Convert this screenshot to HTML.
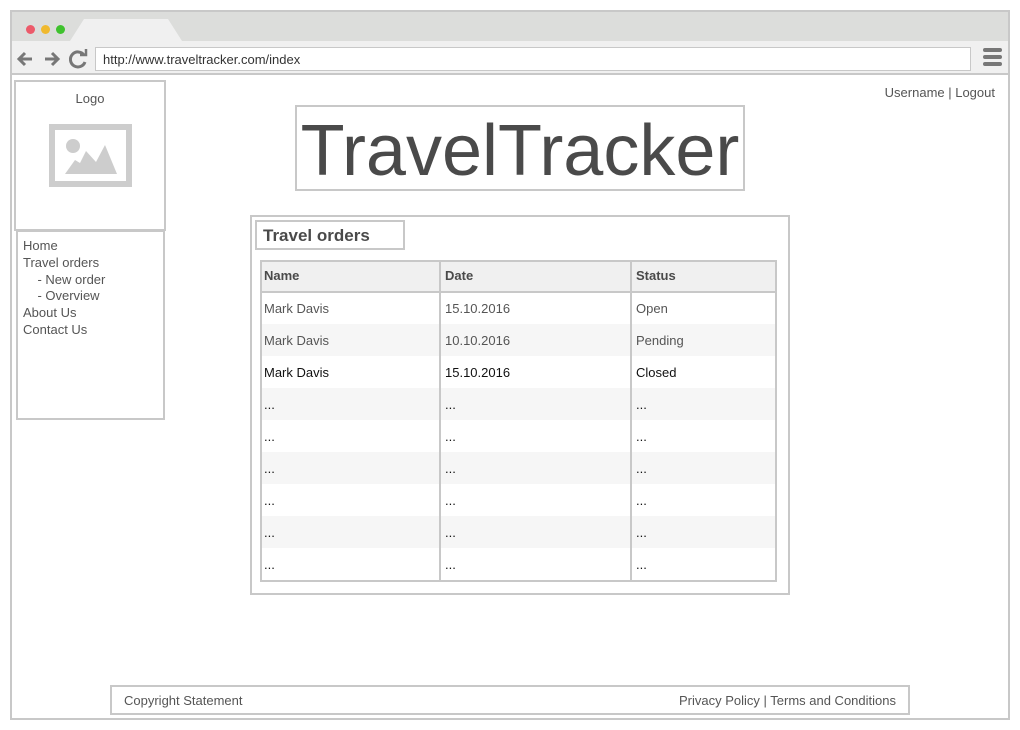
<!DOCTYPE html>
<html><head><style>
body{margin:0;width:1020px;height:730px;background:#fff;font-family:"Liberation Sans",sans-serif;color:#555;position:relative;overflow:hidden}
.a{position:absolute;box-sizing:border-box}
.b{border:2px solid #c8c8c8}
td{padding:0 0 0 4px;height:32px;font-size:13px;border-left:2px solid #c8c8c8;box-sizing:border-box}
table{border-collapse:collapse}
</style></head><body>
<div class="a" style="left:10px;top:10px;width:1000px;height:710px;border:2px solid #c8c8c8"></div>
<div class="a" style="left:12px;top:12px;width:996px;height:29px;background:#dcdddb"></div>
<svg class="a" style="left:70px;top:19px" width="120" height="22"><polygon points="0,22 14,0 98,0 112,22" fill="#f0f0f0"/></svg>
<div class="a" style="left:26px;top:25px;width:9px;height:9px;border-radius:50%;background:#ec5a6a"></div>
<div class="a" style="left:41px;top:25px;width:9px;height:9px;border-radius:50%;background:#f0b92e"></div>
<div class="a" style="left:56px;top:25px;width:9px;height:9px;border-radius:50%;background:#3fc22e"></div>
<div class="a" style="left:12px;top:41px;width:996px;height:34px;background:#f0f0f0;border-bottom:2px solid #c8c8c8"></div>
<svg class="a" style="left:16px;top:48px" width="75" height="22" fill="none" stroke="#777" stroke-width="3">
<path d="M16,11H4M9,5L3,11L9,17"/><path d="M29,11H41M36,5L42,11L36,17"/>
<path d="M68,7A7.5,7.5 0 1 0 69,14"/><path d="M64,7h6v-6" stroke-width="2.5"/></svg>
<div class="a" style="left:95px;top:47px;width:876px;height:24px;background:#fff;border:1px solid #c8c8c8;font-size:13px;color:#333;padding:4px 7px">http://www.traveltracker.com/index</div>
<div class="a" style="left:983px;top:48px;width:19px;height:4px;border-radius:2px;background:#777"></div>
<div class="a" style="left:983px;top:55px;width:19px;height:4px;border-radius:2px;background:#777"></div>
<div class="a" style="left:983px;top:62px;width:19px;height:4px;border-radius:2px;background:#777"></div>
<div class="a" style="right:25px;top:85px;font-size:13px">Username | Logout</div>
<div class="a b" style="left:14px;top:80px;width:152px;height:151px;text-align:center;font-size:13px;padding-top:9px">Logo</div>
<div class="a" style="left:49px;top:124px;width:83px;height:63px;border:6px solid #cdcdcd"></div>
<svg class="a" style="left:55px;top:130px" width="71" height="51"><circle cx="18" cy="16" r="7" fill="#cdcdcd"/><polygon points="10,44 20,30 25,33 31,21 41,32 50,15 62,44" fill="#cdcdcd"/></svg>
<div class="a b" style="left:16px;top:230px;width:149px;height:190px;font-size:13px;line-height:16.8px;padding:6px 0 0 5px">Home<br>Travel orders<br>&nbsp;&nbsp;&nbsp;&nbsp;- New order<br>&nbsp;&nbsp;&nbsp;&nbsp;- Overview<br>About Us<br>Contact Us</div>
<div class="a b" style="left:295px;top:105px;width:450px;height:86px;font-size:72px;color:#4a4a4a;text-align:center;line-height:88px">TravelTracker</div>
<div class="a b" style="left:250px;top:215px;width:540px;height:380px"></div>
<div class="a b" style="left:255px;top:220px;width:150px;height:30px;font-size:17px;font-weight:bold;color:#4a4a4a;padding:4px 0 0 6px">Travel orders</div>
<table class="a" style="left:260px;top:260px;width:517px">
<tr style="background:#f0f0f0;border-bottom:2px solid #c8c8c8"><td style="width:180px;border-left:none;font-weight:bold;color:#4a4a4a">Name</td><td style="width:191px;font-weight:bold;color:#4a4a4a">Date</td><td style="font-weight:bold;color:#4a4a4a">Status</td></tr>
<tr><td style="border-left:none">Mark Davis</td><td>15.10.2016</td><td>Open</td></tr>
<tr style="background:#f6f6f6"><td style="border-left:none">Mark Davis</td><td>10.10.2016</td><td>Pending</td></tr>
<tr style="color:#111"><td style="border-left:none">Mark Davis</td><td>15.10.2016</td><td>Closed</td></tr>
<tr style="background:#f6f6f6;color:#111"><td style="border-left:none">...</td><td>...</td><td>...</td></tr>
<tr style="color:#111"><td style="border-left:none">...</td><td>...</td><td>...</td></tr>
<tr style="background:#f6f6f6;color:#111"><td style="border-left:none">...</td><td>...</td><td>...</td></tr>
<tr style="color:#111"><td style="border-left:none">...</td><td>...</td><td>...</td></tr>
<tr style="background:#f6f6f6;color:#111"><td style="border-left:none">...</td><td>...</td><td>...</td></tr>
<tr style="color:#111"><td style="border-left:none">...</td><td>...</td><td>...</td></tr>
</table>
<div class="a b" style="left:260px;top:260px;width:517px;height:322px"></div>
<div class="a b" style="left:110px;top:685px;width:800px;height:30px;font-size:13px;padding:6px 12px 0 12px">Copyright Statement<span style="float:right">Privacy Policy | Terms and Conditions</span></div>
</body></html>
